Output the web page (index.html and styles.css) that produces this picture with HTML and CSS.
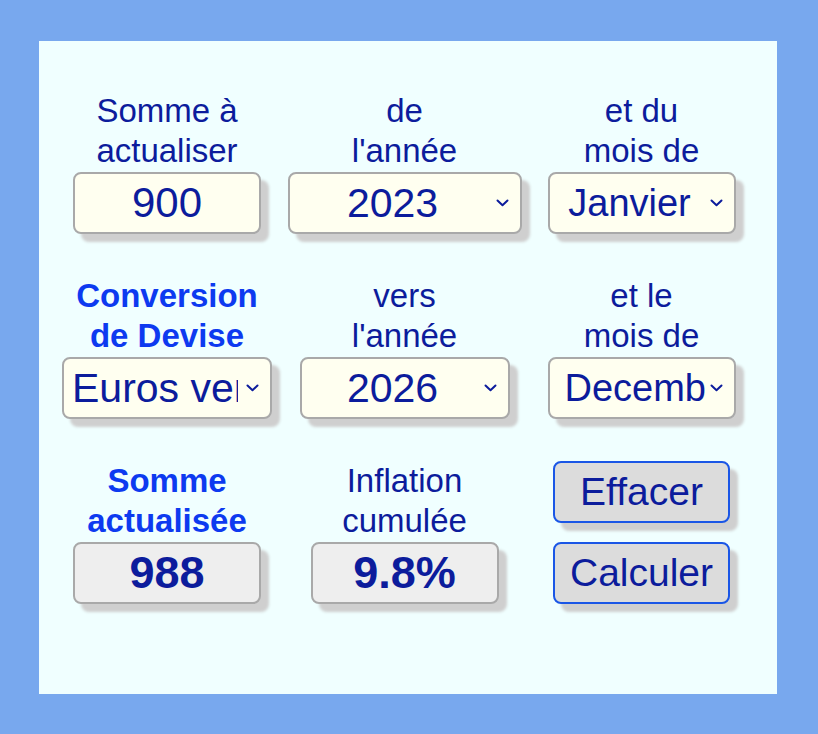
FILE: index.html
```html
<!DOCTYPE html>
<html lang="fr">
<head>
<meta charset="utf-8">
<title>Actualisation</title>
<link rel="stylesheet" href="styles.css">
</head>
<body>
<div class="panel">
  <div class="grid">
    <div class="cell">
      <div class="label">Somme à<br>actualiser</div>
      <input class="box input" type="text" value="900">
    </div>
    <div class="cell">
      <div class="label">de<br>l'année</div>
      <div class="box sel wide">
        <select><option>2023</option></select>
        <svg class="chev" width="13" height="8" viewBox="0 0 13 8"><path d="M1.5 1.5 L6.5 6.3 L11.5 1.5" fill="none" stroke="#0c1c9c" stroke-width="2" stroke-linecap="round" stroke-linejoin="round"/></svg>
      </div>
    </div>
    <div class="cell">
      <div class="label">et du<br>mois de</div>
      <div class="box sel">
        <select class="month"><option>Janvier</option></select>
        <svg class="chev" width="13" height="8" viewBox="0 0 13 8"><path d="M1.5 1.5 L6.5 6.3 L11.5 1.5" fill="none" stroke="#0c1c9c" stroke-width="2" stroke-linecap="round" stroke-linejoin="round"/></svg>
      </div>
    </div>

    <div class="cell">
      <div class="label strong">Conversion<br>de Devise</div>
      <div class="box sel mid">
        <select><option>Euros vers Francs</option></select>
        <svg class="chev" width="13" height="8" viewBox="0 0 13 8"><path d="M1.5 1.5 L6.5 6.3 L11.5 1.5" fill="none" stroke="#0c1c9c" stroke-width="2" stroke-linecap="round" stroke-linejoin="round"/></svg>
      </div>
    </div>
    <div class="cell">
      <div class="label">vers<br>l'année</div>
      <div class="box sel mid">
        <select><option>2026</option></select>
        <svg class="chev" width="13" height="8" viewBox="0 0 13 8"><path d="M1.5 1.5 L6.5 6.3 L11.5 1.5" fill="none" stroke="#0c1c9c" stroke-width="2" stroke-linecap="round" stroke-linejoin="round"/></svg>
      </div>
    </div>
    <div class="cell">
      <div class="label">et le<br>mois de</div>
      <div class="box sel">
        <select class="month left"><option>Decembre</option></select>
        <svg class="chev" width="13" height="8" viewBox="0 0 13 8"><path d="M1.5 1.5 L6.5 6.3 L11.5 1.5" fill="none" stroke="#0c1c9c" stroke-width="2" stroke-linecap="round" stroke-linejoin="round"/></svg>
      </div>
    </div>

    <div class="cell">
      <div class="label strong">Somme<br>actualisée</div>
      <div class="box output">988</div>
    </div>
    <div class="cell">
      <div class="label">Inflation<br>cumulée</div>
      <div class="box output">9.8%</div>
    </div>
    <div class="cell buttons">
      <button class="btn">Effacer</button>
      <button class="btn">Calculer</button>
    </div>
  </div>
</div>
</body>
</html>
```

FILE: styles.css
```css
html, body {
  margin: 0;
  padding: 0;
}
body {
  background: #78a8ee;
  font-family: "Liberation Sans", Arial, sans-serif;
  padding: 41px 0 0 39px;
  height: 734px;
  box-sizing: border-box;
}
.panel {
  width: 738px;
  height: 653px;
  background: #f0ffff;
  box-sizing: border-box;
  padding: 50px 0 0 9px;
}
.grid {
  display: grid;
  grid-template-columns: 238px 237px 237px;
  row-gap: 42px;
}
.cell {
  display: flex;
  flex-direction: column;
  align-items: center;
}
.label {
  font-size: 33px;
  line-height: 40px;
  color: #0c1c9c;
  text-align: center;
  height: 81px;
}
.label.strong {
  font-weight: bold;
  color: #0d3af0;
}
.box {
  box-sizing: border-box;
  height: 62px;
  width: 188px;
  border: 2px solid #a9a9a9;
  border-radius: 8px;
  box-shadow: 8px 8px 3px #cfcfcf;
  font-family: "Liberation Sans", Arial, sans-serif;
  font-size: 42px;
  color: #0c1c9c;
}
.input {
  background: #fffff0;
  text-align: center;
  padding: 0;
  outline: none;
}
.sel {
  background: #fffff0;
  display: flex;
  align-items: center;
  overflow: hidden;
}
.sel.wide { width: 234px; }
.sel.mid { width: 210px; }
.sel select {
  appearance: none;
  -webkit-appearance: none;
  flex: 1;
  min-width: 0;
  height: 100%;
  border: none;
  background: transparent;
  font-family: inherit;
  font-size: 41px;
  color: #0c1c9c;
  padding: 0 8px 0 8px;
  text-align: center;
  text-align-last: center;
  outline: none;
}
.sel select.month {
  font-size: 38px;
}
.sel select.left {
  padding-left: 15px;
  padding-right: 4px;
  text-align: left;
  text-align-last: left;
}
.chev {
  flex: none;
  margin-right: 11px;
}
.output {
  background: #eeeeee;
  font-weight: bold;
  font-size: 45px;
  display: flex;
  align-items: center;
  justify-content: center;
}
.buttons {
  gap: 19px;
}
.btn {
  box-sizing: border-box;
  width: 177px;
  height: 62px;
  border: 2px solid #1a56e6;
  border-radius: 8px;
  background: #dcdcdc;
  box-shadow: 8px 8px 3px #cfcfcf;
  font-family: "Liberation Sans", Arial, sans-serif;
  font-size: 39px;
  color: #0c1c9c;
  padding: 0;
}
```
